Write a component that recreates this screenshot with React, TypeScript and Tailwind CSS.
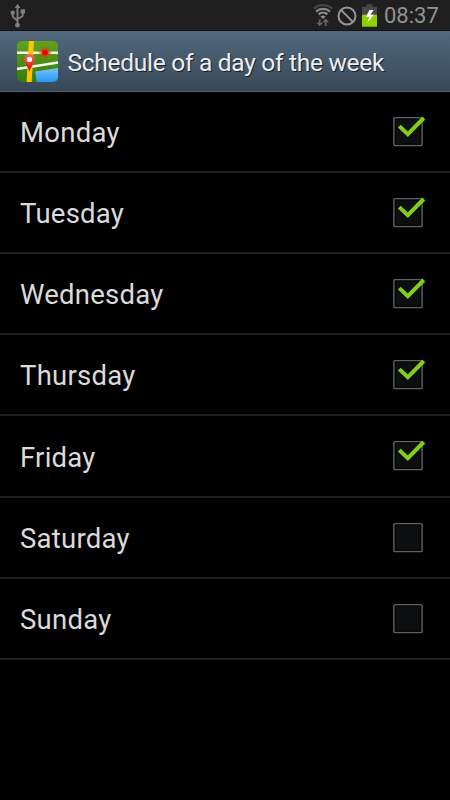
const days = [
  { name: "Monday", checked: true },
  { name: "Tuesday", checked: true },
  { name: "Wednesday", checked: true },
  { name: "Thursday", checked: true },
  { name: "Friday", checked: true },
  { name: "Saturday", checked: false },
  { name: "Sunday", checked: false },
];

function UsbIcon() {
  return (
    <svg width="16" height="24" viewBox="0 0 16 24" fill="none" stroke="#7f7f7f" strokeWidth="1.9">
      <path d="M7.5 3v17M2.7 9v3.2c0 2.2 4.8 2.6 4.8 5M12.8 8v3.2c0 2.6-5.3 2.4-5.3 4.8" />
      <path d="M7.5 -.2l2.9 4.2H4.6z" fill="#7f7f7f" stroke="none" />
      <circle cx="2.7" cy="8.7" r="2.2" fill="#7f7f7f" stroke="none" />
      <path d="M10.6 5.3h4.4v4.2h-4.4z" fill="#7f7f7f" stroke="none" />
      <circle cx="7.5" cy="21.2" r="2.4" fill="#7f7f7f" stroke="none" />
    </svg>
  );
}

function WifiIcon() {
  return (
    <svg width="20" height="24" viewBox="0 0 20 24" fill="none">
      <path d="M.8 4.6C6 -.1 14 -.1 19.2 4.6" stroke="#454545" strokeWidth="2.2" />
      <path d="M3 7.6c4-3.7 10-3.7 14 0" stroke="#8a8a8a" strokeWidth="2.2" />
      <path d="M5.6 10.4c2.6-2.3 6.2-2.3 8.8 0" stroke="#8a8a8a" strokeWidth="2.2" />
      <path d="M7.4 12.4c1.6-1.3 3.6-1.3 5.2 0L10 15z" fill="#8a8a8a" />
      <path d="M6.7 15.5v5.5M12.7 22v-5" stroke="#666666" strokeWidth="1.8" />
      <path d="M3.4 18.7h6.6l-3.3 3.6zM9.4 18.2H16l-3.3-3.6z" fill="#666666" />
    </svg>
  );
}

function BlockedIcon() {
  return (
    <svg width="20" height="20" viewBox="0 0 20 20" fill="none" stroke="#979797" strokeWidth="2">
      <circle cx="10" cy="10" r="8.5" />
      <path d="M3.9 3.9l12.2 12.2" />
    </svg>
  );
}

function BatteryIcon() {
  return (
    <svg width="15" height="23" viewBox="0 0 15 23">
      <path d="M0 2.8h4.5V.3h6v2.5H15V11H0z" fill="#484848" />
      <path d="M0 10.7h15v12H0z" fill="#8fd000" />
      <path d="M7.4 6L4 12.7h3.6L5.2 19l6.6-8.3H8.4L11.6 6z" fill="#ffffff" />
    </svg>
  );
}

function MapIcon() {
  return (
    <svg width="41" height="41" viewBox="0 0 41 41">
      <defs>
        <linearGradient id="land" x1="0" y1="0" x2="0" y2="1">
          <stop offset="0" stopColor="#61a31d" />
          <stop offset="1" stopColor="#347b0a" />
        </linearGradient>
        <linearGradient id="water" x1="0" y1="0" x2="0" y2="1">
          <stop offset="0" stopColor="#7bc1f7" />
          <stop offset="1" stopColor="#2797f4" />
        </linearGradient>
        <linearGradient id="pin" x1="0" y1="0" x2="0" y2="1">
          <stop offset="0" stopColor="#f9635d" />
          <stop offset=".5" stopColor="#e8383a" />
          <stop offset="1" stopColor="#b8000b" />
        </linearGradient>
        <radialGradient id="glow">
          <stop offset="0" stopColor="#e01000" />
          <stop offset=".5" stopColor="#b85010" stopOpacity=".7" />
          <stop offset="1" stopColor="#a07010" stopOpacity="0" />
        </radialGradient>
        <clipPath id="tile">
          <rect width="41" height="41" rx="5" />
        </clipPath>
      </defs>
      <g clipPath="url(#tile)">
        <rect width="41" height="41" fill="url(#land)" />
        <path d="M18.2 30.6L41 27v14H19.7z" fill="url(#water)" />
        <path d="M0 11.8h41M0 27.9l41-6.4" stroke="#f5f8ee" strokeWidth="2.5" />
        <path d="M11.8 0h5.2L14.7 41H9.6z" fill="#ffc400" />
        <circle cx="28" cy="11.6" r="7.6" fill="url(#glow)" />
        <ellipse cx="28" cy="11.6" rx="2.9" ry="2.7" fill="#f50000" />
        <path d="M12.4 31C11.6 25.8 7.1 23 7.1 18.5a5.3 5.5 0 0 1 10.6 0c0 4.5-4.5 7.5-5.3 12.5z" fill="url(#pin)" />
        <circle cx="12.4" cy="18.4" r="2.6" fill="#ffffff" />
      </g>
    </svg>
  );
}

function Checkbox({ checked }: { checked: boolean }) {
  return (
    <svg width="34" height="34" viewBox="0 0 34 34" role="checkbox" aria-checked={checked}>
      <rect x="2" y="4.7" width="28" height="27.8" rx=".8" fill="#0c0e10" stroke="#5d6164" strokeWidth="1.6" />
      <rect x="3.3" y="6" width="25.4" height="25.2" fill="none" stroke="#000000" />
      {checked && <path d="M7.3 13.1l8.5 8.1L31.8 5" fill="none" stroke="#82cf1b" strokeWidth="4" />}
    </svg>
  );
}

export default function App() {
  return (
    <div className="flex h-[800px] w-[450px] flex-col overflow-hidden bg-black font-[Roboto,sans-serif]">
      <div className="flex h-[30px] shrink-0 items-start bg-[#1f1f1f] pl-[10px] pt-[4px]">
        <UsbIcon />
        <div className="ml-auto flex items-start pr-[11px]">
          <WifiIcon />
          <div className="ml-[4px] mt-[2px]">
            <BlockedIcon />
          </div>
          <div className="ml-[5px]">
            <BatteryIcon />
          </div>
          <span className="ml-[7px] w-[55px] whitespace-nowrap text-[22px] leading-[23px] text-[#929292]">
            08:37
          </span>
        </div>
      </div>

      <header className="flex h-[62px] shrink-0 items-center border-b border-t border-b-[#49606f] border-t-[#17130e] bg-linear-to-b from-[#52687e] to-[#384856] pl-[17px]">
        <MapIcon />
        <h1 className="ml-[9.5px] mt-[3px] whitespace-nowrap text-[24.5px] leading-[30px] tracking-[-0.28px] text-[#eeeeee] [text-shadow:1px_1px_0_#16222c]">
          Schedule of a day of the week
        </h1>
      </header>

      <ul className="-mt-[0.4px]">
        {days.map((day) => (
          <li
            key={day.name}
            className="flex h-[81.2px] items-center justify-between border-b-2 border-[#1e1e1e] pl-[20px] pr-[24px]"
          >
            <span className="pt-[3.4px] text-[27.5px] leading-[34px] tracking-[0.25px] text-[#dadada]">
              {day.name}
            </span>
            <div className="pb-[3px]">
              <Checkbox checked={day.checked} />
            </div>
          </li>
        ))}
      </ul>
    </div>
  );
}
